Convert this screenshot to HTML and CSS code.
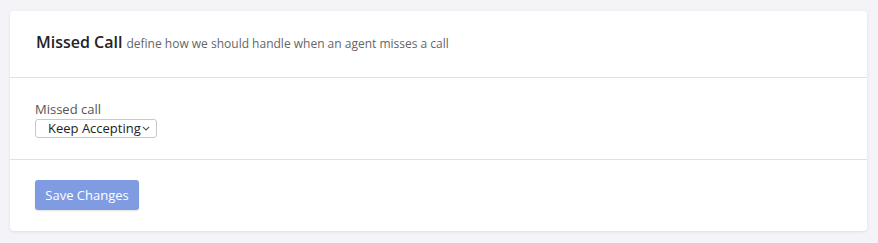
FILE: index.html
```html
<!DOCTYPE html>
<html lang="en">
<head>
<meta charset="utf-8">
<title>Missed Call</title>
<link rel="stylesheet" href="styles.css">
</head>
<body>
<div class="card">
  <div class="card-header">
    <span class="title">Missed Call</span>
    <span class="subtitle">define how we should handle when an agent misses a call</span>
  </div>
  <div class="card-body">
    <label class="field-label" for="missed">Missed call</label>
    <span class="select-wrap">
      <select id="missed" class="select">
        <option>Keep Accepting</option>
        <option>Stop Accepting</option>
      </select>
      <svg class="chevron" width="8" height="5" viewBox="0 0 8 5" aria-hidden="true"><path d="M0.8 0.8 L4 4 L7.2 0.8" fill="none" stroke="#555" stroke-width="1.1"/></svg>
    </span>
  </div>
  <div class="card-footer">
    <button class="btn" type="button">Save Changes</button>
  </div>
</div>
</body>
</html>
```

FILE: styles.css
```css
html, body {
  margin: 0;
  padding: 0;
}
body {
  background: #f3f3f8;
  padding: 11px 11px 12px 10px;
  font-family: "Open Sans", "Noto Sans", sans-serif;
  color: #222;
}
.card {
  background: #fff;
  border-radius: 4px;
  box-shadow: 0 1px 3px rgba(40, 40, 80, 0.10);
}
.card-header {
  display: flex;
  align-items: baseline;
  gap: 4px;
  padding: 20px 25px 24px 26px;
  border-bottom: 1px solid #e1e1e4;
}
.title {
  font-size: 16px;
  line-height: 22px;
  font-weight: 600;
  color: #222326;
}
.subtitle {
  font-size: 12px;
  line-height: 16px;
  color: #666;
}
.card-body {
  display: flex;
  flex-direction: column;
  align-items: flex-start;
  padding: 22px 25px 21px 25px;
  border-bottom: 1px solid #e1e1e4;
}
.field-label {
  display: block;
  font-size: 13px;
  line-height: 18px;
  color: #555;
  margin-bottom: 1px;
}
.select-wrap {
  position: relative;
  display: block;
  height: 19px;
}
.select {
  appearance: none;
  -webkit-appearance: none;
  display: block;
  width: 122px;
  height: 19px;
  box-sizing: border-box;
  margin: 0;
  padding: 0 0 0 12px;
  border: 1px solid #c9c9cc;
  border-radius: 3px;
  background: #fff;
  font-family: "Open Sans", "Noto Sans", sans-serif;
  font-size: 13px;
  line-height: 17px;
  color: #222;
}
.chevron {
  position: absolute;
  left: 107px;
  top: 7px;
  pointer-events: none;
}
.card-footer {
  padding: 20px 25px 21px 25px;
}
.btn {
  display: block;
  height: 30px;
  width: 104px;
  padding: 0;
  border: none;
  border-radius: 3px;
  background: #7f9ce2;
  color: #fff;
  font-family: "Open Sans", "Noto Sans", sans-serif;
  font-size: 13px;
  box-shadow: 0 1px 2px rgba(0, 0, 0, 0.12);
}
```
